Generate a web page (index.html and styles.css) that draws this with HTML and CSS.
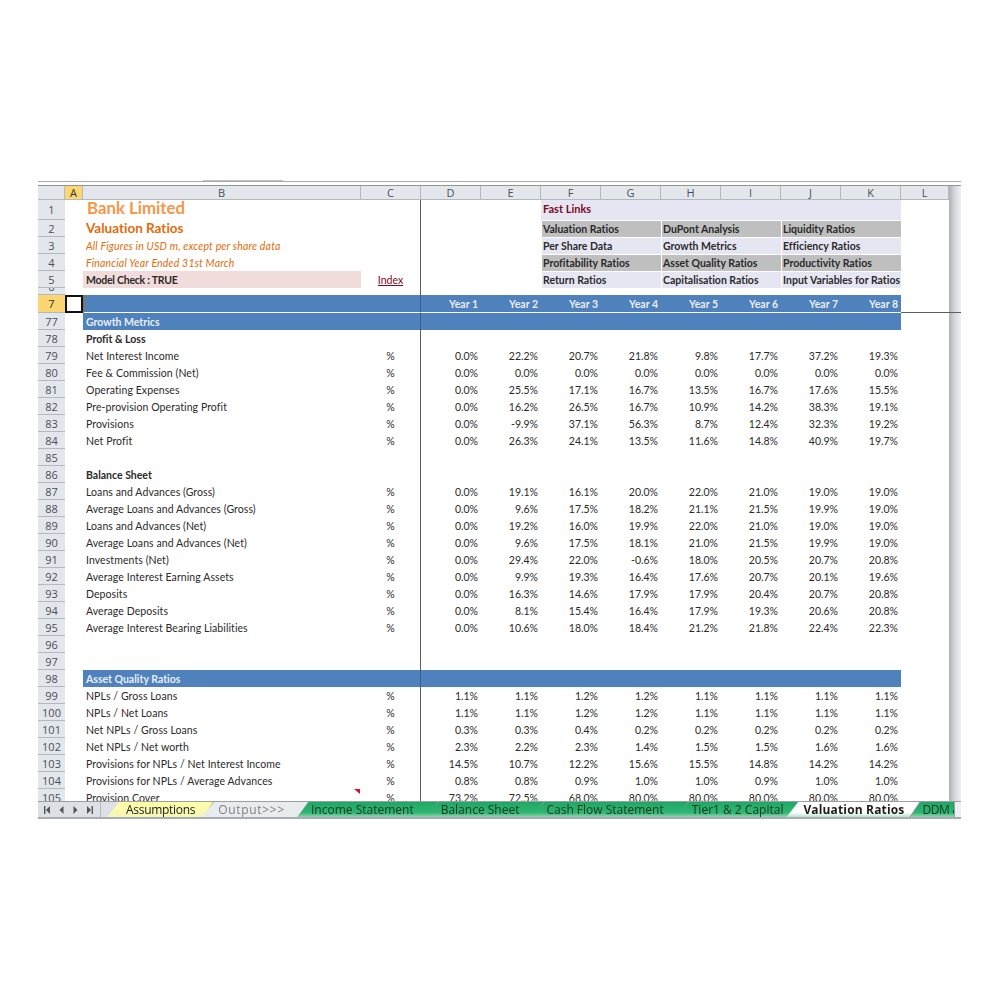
FILE: index.html
```html
<!DOCTYPE html>
<html lang="en">
<head>
  <meta charset="UTF-8" />
  <title>Valuation Ratios</title>
  <link rel="stylesheet" href="styles.css">
</head>
<body>
  <div class="window">
    <div class="formula-edge"><div class="formula-tab"></div></div>

    <div class="sheet-area">
      <div class="sheet">
        <table class="grid">
          <colgroup>
            <col class="col-rowhead"><col class="col-a"><col class="col-b"><col class="col-c">
            <col class="col-y"><col class="col-y"><col class="col-y"><col class="col-y">
            <col class="col-y"><col class="col-y"><col class="col-y"><col class="col-y">
            <col class="col-l">
          </colgroup>
          <thead>
            <tr class="colhead">
              <th class="corner"></th><th class="active">A</th><th>B</th><th>C</th><th>D</th><th>E</th><th>F</th><th>G</th><th>H</th><th>I</th><th>J</th><th>K</th><th>L</th>
            </tr>
          </thead>
          <tbody>
            <tr class="row-tall"><th>1</th><td></td><td class="title">Bank Limited</td><td class="c"></td><td></td><td></td><td colspan="6" class="links-head">Fast Links</td><td></td></tr>
            <tr><th>2</th><td></td><td class="subtitle">Valuation Ratios</td><td class="c"></td><td></td><td></td><td colspan="2" class="link grey">Valuation Ratios</td><td colspan="2" class="link grey">DuPont Analysis</td><td colspan="2" class="link grey">Liquidity Ratios</td><td></td></tr>
            <tr><th>3</th><td></td><td class="note">All Figures in USD m, except per share data</td><td class="c"></td><td></td><td></td><td colspan="2" class="link">Per Share Data</td><td colspan="2" class="link">Growth Metrics</td><td colspan="2" class="link">Efficiency Ratios</td><td></td></tr>
            <tr><th>4</th><td></td><td class="note">Financial Year Ended 31st March</td><td class="c"></td><td></td><td></td><td colspan="2" class="link grey">Profitability Ratios</td><td colspan="2" class="link grey">Asset Quality Ratios</td><td colspan="2" class="link grey">Productivity Ratios</td><td></td></tr>
            <tr><th>5</th><td></td><td class="check">Model Check : TRUE</td><td class="c index">Index</td><td></td><td></td><td colspan="2" class="link">Return Ratios</td><td colspan="2" class="link">Capitalisation Ratios</td><td colspan="2" class="link">Input Variables for Ratios</td><td></td></tr>
            <tr class="row-thin"><th><span class="cut">6</span></th><td></td><td></td><td class="c"></td><td></td><td></td><td></td><td></td><td></td><td></td><td></td><td></td><td></td></tr>
            <tr class="band band-years"><th class="active">7</th><td class="selected"></td><td></td><td class="c"></td><td>Year 1</td><td>Year 2</td><td>Year 3</td><td>Year 4</td><td>Year 5</td><td>Year 6</td><td>Year 7</td><td>Year 8</td><td class="off"></td></tr>
            <tr class="band"><th>77</th><td class="off"></td><td>Growth Metrics</td><td class="c"></td><td></td><td></td><td></td><td></td><td></td><td></td><td></td><td></td><td class="off"></td></tr>
            <tr><th>78</th><td></td><td class="bold">Profit &amp; Loss</td><td class="c"></td><td colspan="9"></td></tr>
            <tr><th>79</th><td></td><td class="label">Net Interest Income</td><td class="c">%</td><td class="n">0.0%</td><td class="n">22.2%</td><td class="n">20.7%</td><td class="n">21.8%</td><td class="n">9.8%</td><td class="n">17.7%</td><td class="n">37.2%</td><td class="n">19.3%</td><td></td></tr>
            <tr><th>80</th><td></td><td class="label">Fee &amp; Commission (Net)</td><td class="c">%</td><td class="n">0.0%</td><td class="n">0.0%</td><td class="n">0.0%</td><td class="n">0.0%</td><td class="n">0.0%</td><td class="n">0.0%</td><td class="n">0.0%</td><td class="n">0.0%</td><td></td></tr>
            <tr><th>81</th><td></td><td class="label">Operating Expenses</td><td class="c">%</td><td class="n">0.0%</td><td class="n">25.5%</td><td class="n">17.1%</td><td class="n">16.7%</td><td class="n">13.5%</td><td class="n">16.7%</td><td class="n">17.6%</td><td class="n">15.5%</td><td></td></tr>
            <tr><th>82</th><td></td><td class="label">Pre-provision Operating Profit</td><td class="c">%</td><td class="n">0.0%</td><td class="n">16.2%</td><td class="n">26.5%</td><td class="n">16.7%</td><td class="n">10.9%</td><td class="n">14.2%</td><td class="n">38.3%</td><td class="n">19.1%</td><td></td></tr>
            <tr><th>83</th><td></td><td class="label">Provisions</td><td class="c">%</td><td class="n">0.0%</td><td class="n">-9.9%</td><td class="n">37.1%</td><td class="n">56.3%</td><td class="n">8.7%</td><td class="n">12.4%</td><td class="n">32.3%</td><td class="n">19.2%</td><td></td></tr>
            <tr><th>84</th><td></td><td class="label">Net Profit</td><td class="c">%</td><td class="n">0.0%</td><td class="n">26.3%</td><td class="n">24.1%</td><td class="n">13.5%</td><td class="n">11.6%</td><td class="n">14.8%</td><td class="n">40.9%</td><td class="n">19.7%</td><td></td></tr>
            <tr><th>85</th><td></td><td></td><td class="c"></td><td colspan="9"></td></tr>
            <tr><th>86</th><td></td><td class="bold">Balance Sheet</td><td class="c"></td><td colspan="9"></td></tr>
            <tr><th>87</th><td></td><td class="label">Loans and Advances (Gross)</td><td class="c">%</td><td class="n">0.0%</td><td class="n">19.1%</td><td class="n">16.1%</td><td class="n">20.0%</td><td class="n">22.0%</td><td class="n">21.0%</td><td class="n">19.0%</td><td class="n">19.0%</td><td></td></tr>
            <tr><th>88</th><td></td><td class="label">Average Loans and Advances (Gross)</td><td class="c">%</td><td class="n">0.0%</td><td class="n">9.6%</td><td class="n">17.5%</td><td class="n">18.2%</td><td class="n">21.1%</td><td class="n">21.5%</td><td class="n">19.9%</td><td class="n">19.0%</td><td></td></tr>
            <tr><th>89</th><td></td><td class="label">Loans and Advances (Net)</td><td class="c">%</td><td class="n">0.0%</td><td class="n">19.2%</td><td class="n">16.0%</td><td class="n">19.9%</td><td class="n">22.0%</td><td class="n">21.0%</td><td class="n">19.0%</td><td class="n">19.0%</td><td></td></tr>
            <tr><th>90</th><td></td><td class="label">Average Loans and Advances (Net)</td><td class="c">%</td><td class="n">0.0%</td><td class="n">9.6%</td><td class="n">17.5%</td><td class="n">18.1%</td><td class="n">21.0%</td><td class="n">21.5%</td><td class="n">19.9%</td><td class="n">19.0%</td><td></td></tr>
            <tr><th>91</th><td></td><td class="label">Investments (Net)</td><td class="c">%</td><td class="n">0.0%</td><td class="n">29.4%</td><td class="n">22.0%</td><td class="n">-0.6%</td><td class="n">18.0%</td><td class="n">20.5%</td><td class="n">20.7%</td><td class="n">20.8%</td><td></td></tr>
            <tr><th>92</th><td></td><td class="label">Average Interest Earning Assets</td><td class="c">%</td><td class="n">0.0%</td><td class="n">9.9%</td><td class="n">19.3%</td><td class="n">16.4%</td><td class="n">17.6%</td><td class="n">20.7%</td><td class="n">20.1%</td><td class="n">19.6%</td><td></td></tr>
            <tr><th>93</th><td></td><td class="label">Deposits</td><td class="c">%</td><td class="n">0.0%</td><td class="n">16.3%</td><td class="n">14.6%</td><td class="n">17.9%</td><td class="n">17.9%</td><td class="n">20.4%</td><td class="n">20.7%</td><td class="n">20.8%</td><td></td></tr>
            <tr><th>94</th><td></td><td class="label">Average Deposits</td><td class="c">%</td><td class="n">0.0%</td><td class="n">8.1%</td><td class="n">15.4%</td><td class="n">16.4%</td><td class="n">17.9%</td><td class="n">19.3%</td><td class="n">20.6%</td><td class="n">20.8%</td><td></td></tr>
            <tr><th>95</th><td></td><td class="label">Average Interest Bearing Liabilities</td><td class="c">%</td><td class="n">0.0%</td><td class="n">10.6%</td><td class="n">18.0%</td><td class="n">18.4%</td><td class="n">21.2%</td><td class="n">21.8%</td><td class="n">22.4%</td><td class="n">22.3%</td><td></td></tr>
            <tr><th>96</th><td></td><td></td><td class="c"></td><td colspan="9"></td></tr>
            <tr><th>97</th><td></td><td></td><td class="c"></td><td colspan="9"></td></tr>
            <tr class="band"><th>98</th><td class="off"></td><td>Asset Quality Ratios</td><td class="c"></td><td></td><td></td><td></td><td></td><td></td><td></td><td></td><td></td><td class="off"></td></tr>
            <tr><th>99</th><td></td><td class="label">NPLs / Gross Loans</td><td class="c">%</td><td class="n">1.1%</td><td class="n">1.1%</td><td class="n">1.2%</td><td class="n">1.2%</td><td class="n">1.1%</td><td class="n">1.1%</td><td class="n">1.1%</td><td class="n">1.1%</td><td></td></tr>
            <tr><th>100</th><td></td><td class="label">NPLs / Net Loans</td><td class="c">%</td><td class="n">1.1%</td><td class="n">1.1%</td><td class="n">1.2%</td><td class="n">1.2%</td><td class="n">1.1%</td><td class="n">1.1%</td><td class="n">1.1%</td><td class="n">1.1%</td><td></td></tr>
            <tr><th>101</th><td></td><td class="label">Net NPLs / Gross Loans</td><td class="c">%</td><td class="n">0.3%</td><td class="n">0.3%</td><td class="n">0.4%</td><td class="n">0.2%</td><td class="n">0.2%</td><td class="n">0.2%</td><td class="n">0.2%</td><td class="n">0.2%</td><td></td></tr>
            <tr><th>102</th><td></td><td class="label">Net NPLs / Net worth</td><td class="c">%</td><td class="n">2.3%</td><td class="n">2.2%</td><td class="n">2.3%</td><td class="n">1.4%</td><td class="n">1.5%</td><td class="n">1.5%</td><td class="n">1.6%</td><td class="n">1.6%</td><td></td></tr>
            <tr><th>103</th><td></td><td class="label">Provisions for NPLs / Net Interest Income</td><td class="c">%</td><td class="n">14.5%</td><td class="n">10.7%</td><td class="n">12.2%</td><td class="n">15.6%</td><td class="n">15.5%</td><td class="n">14.8%</td><td class="n">14.2%</td><td class="n">14.2%</td><td></td></tr>
            <tr><th>104</th><td></td><td class="label">Provisions for NPLs / Average Advances</td><td class="c">%</td><td class="n">0.8%</td><td class="n">0.8%</td><td class="n">0.9%</td><td class="n">1.0%</td><td class="n">1.0%</td><td class="n">0.9%</td><td class="n">1.0%</td><td class="n">1.0%</td><td></td></tr>
            <tr><th>105</th><td></td><td class="label has-comment">Provision Cover<span class="comment"></span></td><td class="c">%</td><td class="n">73.2%</td><td class="n">72.5%</td><td class="n">68.0%</td><td class="n">80.0%</td><td class="n">80.0%</td><td class="n">80.0%</td><td class="n">80.0%</td><td class="n">80.0%</td><td></td></tr>
          </tbody>
        </table>
      </div>
      <div class="scrollbar"></div>
      <div class="freeze-tail"></div>
    </div>

    <div class="tabbar">
      <div class="tab-nav">
        <svg width="7" height="8" viewBox="0 0 7 8"><rect x="0" y="0" width="1.4" height="8" fill="#555"/><polygon points="6,0 6,8 2,4" fill="#555"/></svg>
        <svg width="5" height="8" viewBox="0 0 5 8"><polygon points="4.5,0 4.5,8 0.5,4" fill="#555"/></svg>
        <svg width="5" height="8" viewBox="0 0 5 8"><polygon points="0.5,0 0.5,8 4.5,4" fill="#555"/></svg>
        <svg width="7" height="8" viewBox="0 0 7 8"><polygon points="1,0 1,8 5,4" fill="#555"/><rect x="5.6" y="0" width="1.4" height="8" fill="#555"/></svg>
      </div>
      <div class="tabs">
        <div class="tab tab-yellow">Assumptions</div>
        <div class="tab tab-plain">Output&gt;&gt;&gt;</div>
        <div class="tab tab-green">Income Statement</div>
        <div class="tab tab-green">Balance Sheet</div>
        <div class="tab tab-green">Cash Flow Statement</div>
        <div class="tab tab-green tab-tier">Tier1 &amp; 2 Capital</div>
        <div class="tab tab-current">Valuation Ratios</div>
        <div class="tab tab-green tab-last">DDM &amp; Valuation</div>
      </div>
      <div class="tab-grip"></div>
    </div>
  </div>
</body>
</html>
```

FILE: styles.css
```css
body {
  margin: 0;
  background: #fff;
  color: #2a2a2a;
  font-family: Lato, "Open Sans", sans-serif;
  font-variant-ligatures: none;
}

.window {
  width: 923px;
  margin: 181px 0 0 38px;
  border-bottom: 2px solid #a9adb3;
}

.formula-edge {
  height: 5px;
  box-sizing: border-box;
  border-top: 1px solid #a8a8a8;
  border-bottom: 1px solid #8f949b;
  position: relative;
}

.formula-tab {
  position: absolute;
  left: 165px;
  top: -2px;
  width: 80px;
  height: 1px;
  background: #c4c4c4;
}

.sheet-area {
  display: flex;
  height: 615px;
  position: relative;
}

.sheet {
  width: 911px;
  overflow: hidden;
}

.scrollbar {
  width: 12px;
  background: linear-gradient(to right, #aeb2b8, #d6d9dd 50%, #eef0f2);
}

.freeze-tail {
  position: absolute;
  left: 863px;
  right: 0;
  top: 126px;
  height: 1px;
  background: #5c5c5c;
}

/* grid */
.grid {
  table-layout: fixed;
  width: 911px;
  border-collapse: separate;
  border-spacing: 0;
  font-size: 10.5px;
}

.col-rowhead { width: 27px; }
.col-a { width: 18px; }
.col-b { width: 278px; }
.col-c { width: 60px; }
.col-y { width: 60px; }
.col-l { width: 48px; }

.grid tr { height: 17px; }
.grid tr.row-tall { height: 20px; }
.grid tr.row-thin { height: 7px; }
.grid tr.colhead { height: 14px; }
.grid tr.band-years { height: 18px; }

.grid td {
  box-sizing: border-box;
  padding: 0 3px;
  white-space: nowrap;
  overflow: hidden;
  line-height: 15px;
  vertical-align: bottom;
}

.grid th {
  box-sizing: border-box;
  padding: 0;
  font-family: "Open Sans", sans-serif;
  font-weight: 400;
  font-size: 11px;
  color: #4a4f57;
  background: #e3e7ec;
  text-align: center;
  overflow: hidden;
}

.grid tbody th {
  border-bottom: 1px solid #b4b9c1;
  line-height: 15px;
}

.colhead th {
  line-height: 13px;
  border-right: 1px solid #b4b9c1;
  border-bottom: 1px solid #b4b9c1;
}

.grid th.active {
  background: #fbd672;
  color: #333;
}

.corner { background: #dfe3e8; }

.row-thin th { line-height: 6px !important; }
.cut { position: relative; top: -4px; }

.c {
  text-align: center;
  border-right: 1px solid #5c5c5c;
}

.n { text-align: right; }
.bold { font-weight: 700; }
.label { letter-spacing: 0.08px; }

.grid td.title {
  font-size: 16.8px;
  font-weight: 700;
  color: #f79646;
  line-height: 16px;
  padding-left: 4px;
  vertical-align: top;
}

.grid td.subtitle {
  font-size: 13.5px;
  font-weight: 700;
  line-height: 17px;
  vertical-align: top;
  color: #e36c0a;
}

.note {
  font-size: 10.5px;
  font-style: italic;
  letter-spacing: 0.18px;
  color: #e36c0a;
}

.check {
  background: #f2dcdb;
  font-weight: 700;
  letter-spacing: -0.25px;
}

.index {
  color: #7a0a24;
  text-decoration: underline;
}

.grid td.links-head {
  background: #e6e6f3;
  color: #7a0a24;
  font-weight: 700;
  font-size: 11px;
  line-height: 18px;
  padding-left: 2px;
  vertical-align: top;
}

.grid td.link {
  background: #e6e6f3;
  font-weight: 700;
  padding-left: 1px;
  border-left: 1px solid #fff;
  border-top: 1px solid #fff;
}

.grid td.link.grey { background: #bfbfbf; }

.band td {
  background: #4f81bd;
  color: #e8eef6;
  font-weight: 700;
}

.band td.off { background: #fff; }

.band-years td {
  text-align: right;
  border-bottom: 1px solid #fff;
}

.band-years td.off { border-bottom: 1px solid #5c5c5c; }

.band td.c { border-right: 1px solid #3d5f88; }

.band td.selected {
  background: #fff;
  border: 2px solid #111;
}

.selected + td { border-left: 2px solid #7d7565; }

.has-comment { position: relative; overflow: visible !important; }

.comment {
  position: absolute;
  top: 0;
  right: 1px;
  width: 0;
  height: 0;
  border-top: 5px solid #e0102a;
  border-left: 6px solid transparent;
}

/* sheet tabs */
.tabbar {
  display: flex;
  height: 15px;
  background: #dde1e6;
  border-top: 1px solid #9a9ea5;
}

.tab-nav {
  width: 63px;
  flex-shrink: 0;
  display: flex;
  align-items: center;
  justify-content: space-between;
  box-sizing: border-box;
  padding: 0 7px 0 6px;
  border-right: 1px solid #b4b9c1;
}

.tabs {
  flex: 1;
  display: flex;
  overflow: hidden;
  padding-left: 6px;
}

.tab {
  position: relative;
  flex-shrink: 0;
  padding: 0 24px 0 14px;
  margin-right: -11px;
  line-height: 15px;
  font-family: "Open Sans", sans-serif;
  font-size: 12px;
  color: #17381f;
  white-space: nowrap;
  filter: drop-shadow(1px 0 0 #8d9299);
}

.tab::before {
  content: "";
  position: absolute;
  inset: 0;
  z-index: -1;
  clip-path: polygon(0 100%, 12px 0, 100% 0, calc(100% - 10px) 100%);
}

.tab-yellow {
  color: #222;
  padding-left: 19px;
  padding-right: 18px;
  letter-spacing: -0.3px;
}
.tab-yellow::before { background: linear-gradient(#ffffa6, #f6f6b8); }

.tab-plain {
  color: #7f7f7f;
  padding-left: 16px;
  padding-right: 23px;
  letter-spacing: 0.7px;
}
.tab-plain::before { background: #e9ecef; }

.tab-green::before { background: linear-gradient(#1fa862, #2fb573 70%, #8fd6ad); }

.tab-tier { padding-left: 15px; padding-right: 14px; }
.tab-last { letter-spacing: -0.4px; }

.tab-current {
  z-index: 2;
  font-weight: 700;
  color: #1c1c1c;
  padding-left: 17px;
  padding-right: 15px;
  letter-spacing: 0.15px;
}

.tab-current::before { background: linear-gradient(#fff 70%, #b6e3c9); }

.tab-grip {
  width: 6px;
  flex-shrink: 0;
  background: #eceef1;
  border-left: 1px solid #9a9ea5;
}
```
